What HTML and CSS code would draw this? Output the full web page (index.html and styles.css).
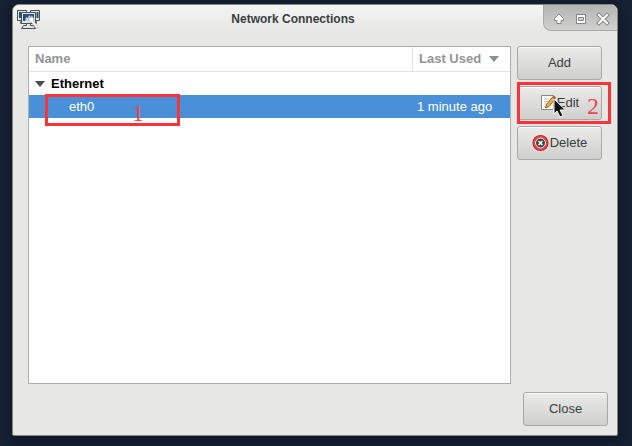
FILE: index.html
```html
<!DOCTYPE html>
<html lang="en">
<head>
    <meta charset="UTF-8">
    <title>Network Connections</title>
    <link rel="stylesheet" href="styles.css">
</head>
<body>
<div class="window">
    <div class="titlebar">
        <svg class="app-icon" width="24" height="20" viewBox="0 0 24 20">
            <g stroke="#4a5054" fill="#e4e5df">
                <path d="M.5.5h9v10h-9zM13.500.5h9v10h-9z"/>
                <path d="M3 12.500h4M16 12.500h4" stroke-width="2"/>
                <path d="M4.500 2.500h14v11h-14z"/>
                <path d="M9.500 13.500h4v2h3l2 3h-14l2-3h3z"/>
            </g>
            <path d="M2 2h2v6H2zM19.500 2h2v6h-2zM6 4h11v7H6z" fill="#264f7d"/>
            <path d="M8 11l1-4 2 1 1-3 2 2 1-2 1 6z" fill="#c3d9e8"/>
            <path d="M12 7l2 1 1-2 2 3-.5 2 5 6.500-2 1-5-6-2.500-1z" fill="#fff" stroke="#92958f" stroke-width=".5"/>
        </svg>
        <h1 class="title">Network Connections</h1>
        <div class="controls">
            <button type="button" aria-label="Shade">
                <svg width="14" height="14" viewBox="0 0 14 14"><path d="M7 2l4.500 4.500v2H9v3H5v-3H2.500v-2z" fill="#fff" stroke="#858585" stroke-linejoin="round"/></svg>
            </button>
            <button type="button" aria-label="Maximize">
                <svg width="14" height="14" viewBox="0 0 14 14"><path d="M2.500 2.500h9v9h-9z" fill="#fff" stroke="#858585"/><path d="M4.500 5.500h5v3h-5z" fill="#d0d0d0" stroke="#858585"/></svg>
            </button>
            <button type="button" aria-label="Close window">
                <svg width="14" height="14" viewBox="0 0 14 14"><path d="M3 3l8 8M11 3l-8 8" stroke="#858585" stroke-width="4" stroke-linecap="square"/><path d="M3 3l8 8M11 3l-8 8" stroke="#fff" stroke-width="2" stroke-linecap="square"/></svg>
            </button>
        </div>
    </div>
    <div class="content">
        <div class="list">
            <table>
                <thead>
                    <tr>
                        <th>Name</th>
                        <th class="used">Last Used
                            <svg width="10" height="6" viewBox="0 0 10 6"><path d="M0 0h10L5 6z" fill="#8c8f8f"/></svg>
                        </th>
                    </tr>
                </thead>
                <tbody>
                    <tr class="group">
                        <td colspan="2"><svg width="10" height="6" viewBox="0 0 10 6"><path d="M0 0h10L5 6z" fill="#4c4c4c"/></svg>Ethernet</td>
                    </tr>
                    <tr class="selected">
                        <td class="name">eth0<span class="mark mark-row"><span>1</span></span></td>
                        <td class="used">1 minute ago</td>
                    </tr>
                </tbody>
            </table>
        </div>
        <div class="actions">
            <button type="button" class="btn">Add</button>
            <button type="button" class="btn btn-edit">
                <svg width="16" height="18" viewBox="0 0 16 18">
                    <path d="M1.500 1.500h12v14h-12z" fill="#fafaf8" stroke="#888a85"/>
                    <path d="M4 5h5M4 7.500h4M4 10h3M4 12.500h3" stroke="#c4c6c2"/>
                    <path d="M6.500 10.500L12.500 3l2.500 2-6 7.500L5.500 14z" fill="#f2ae3a" stroke="#6b4a18" stroke-width=".8"/>
                    <path d="M12.500 3l1-1.500 2.500 2L15 5z" fill="#d94436"/>
                </svg>Edit
                <svg class="pointer" width="14" height="20" viewBox="0 0 14 20">
                    <path d="M1 1v15l3-3 3 6 3-1.500-3-5.500h5.500z" fill="#111" stroke="#fff"/>
                </svg>
                <span class="mark mark-edit"><span>2</span></span>
            </button>
            <button type="button" class="btn">
                <svg width="17" height="18" viewBox="0 0 17 18">
                    <circle cx="8.5" cy="9" r="8" fill="#d21f1f"/>
                    <circle cx="8.5" cy="9" r="6.5" fill="none" stroke="#ea5550"/>
                    <circle cx="8.5" cy="9" r="5" fill="#444" stroke="#fff"/>
                    <path d="M6.500 7l4 4M10.500 7l-4 4" stroke="#fff" stroke-width="1.500"/>
                </svg>Delete
            </button>
        </div>
    </div>
    <div class="footer">
        <button type="button" class="btn">Close</button>
    </div>
</div>
</body>
</html>
```
FILE: styles.css
```css
* {
    box-sizing: border-box;
}
body {
    display: flex;
    min-height: 100vh;
    margin: 0;
    padding: 4px 14px 10px 12px;
    background: #152033;
    font: 13px/16px "Liberation Sans", Arial, sans-serif;
    color: #3a3e40;
}
button {
    font: inherit;
    color: inherit;
}
.window {
    flex: 1;
    display: flex;
    flex-direction: column;
    border: 1px solid #85867f;
    border-radius: 7px 7px 2px 2px;
    background: #e7e7e5;
    box-shadow: 0 3px 8px #0b1320;
}
/* title bar */
.titlebar {
    display: grid;
    grid-template-columns: 74px 1fr 74px;
    height: 26px;
    border-radius: 6px 6px 0 0;
    background: linear-gradient(#f4f4f3, #e7e7e5);
}
.app-icon {
    margin: 5px 0 0 4px;
}
.title {
    margin: 6px 0 0;
    padding-right: 44px;
    font-size: 12px;
    line-height: 16px;
    text-align: center;
}
.controls {
    display: flex;
    align-items: center;
    justify-content: center;
    gap: 8px;
    padding-top: 2px;
    border-left: 1px solid #aaa;
    border-bottom: 1px solid #aaa;
    border-radius: 0 6px 0 8px;
    background: linear-gradient(#b4b4b3, #d0d0ce);
}
.controls button {
    display: flex;
    padding: 0;
    border: 0;
    background: none;
}
/* connections */
.content {
    flex: 1;
    display: flex;
    gap: 6px;
    padding: 15px 15px 0;
}
.list {
    flex: 1;
    border: 1px solid #adada9;
    background: #fff;
}
table {
    width: 100%;
    table-layout: fixed;
    border-collapse: separate;
    border-spacing: 0;
}
th {
    height: 25px;
    padding: 0 6px;
    border-bottom: 1px solid #e2e2e2;
    color: #919595;
    text-align: left;
}
th.used {
    width: 98px;
    border-left: 1px solid #e2e2e2;
    white-space: nowrap;
}
th svg {
    margin-left: 4px;
    vertical-align: 1px;
}
td {
    height: 23px;
    padding: 0 6px;
}
.group td {
    color: #000;
    font-weight: bold;
}
.group svg {
    margin-right: 6px;
    vertical-align: 1px;
}
.selected td {
    background: #4a90d9;
    color: #fff;
}
.selected .name {
    position: relative;
    padding-left: 40px;
}
.selected .used {
    padding-left: 5px;
}
/* buttons */
.actions {
    display: flex;
    flex-direction: column;
    gap: 6px;
}
.btn {
    position: relative;
    display: flex;
    align-items: center;
    justify-content: center;
    width: 85px;
    height: 34px;
    padding: 0;
    border: 1px solid #a9a9a6;
    border-radius: 3px;
    background: linear-gradient(#ebebea, #cfcfcd);
    box-shadow: inset 0 1px #fafafa;
}
.btn svg {
    margin-right: 1px;
}
.footer {
    display: flex;
    justify-content: flex-end;
    padding: 8px 9px 9px;
}
/* red callouts over the steps */
.mark {
    position: absolute;
    border: 3px solid #fb3238;
    color: #f5444a;
    font: 24px/24px "Liberation Serif", serif;
}
.mark span {
    position: absolute;
}
.mark-row {
    top: -1px;
    left: 16px;
    width: 135px;
    height: 32px;
}
.mark-row span {
    left: 84px;
    top: 4px;
}
.mark-edit {
    top: -5px;
    left: -1px;
    width: 94px;
    height: 42px;
}
.mark-edit span {
    right: 9px;
    top: 9px;
}
.btn .pointer {
    position: absolute;
    top: 11px;
    left: 35px;
    margin: 0;
}
```
